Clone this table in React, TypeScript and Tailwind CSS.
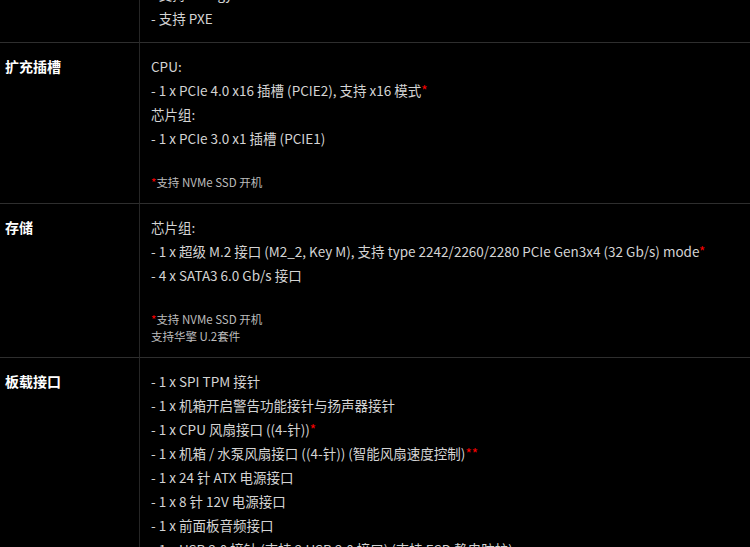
import { Fragment, ReactNode } from "react";

type Spec = {
  label: string;
  lines: ReactNode[];
  notes?: ReactNode[];
};

const Star = ({ n = 1 }: { n?: number }) => (
  <span className="text-[#ff0000]">{"*".repeat(n)}</span>
);

const specs: Spec[] = [
  {
    label: "网络功能",
    lines: ["- Realtek 1Gb 以太网", "- 支持 Energy", "- 支持 PXE"],
  },
  {
    label: "扩充插槽",
    lines: [
      "CPU:",
      <>
        - 1 x PCIe 4.0 x16 插槽 (PCIE2), 支持 x16 模式
        <Star />
      </>,
      "芯片组:",
      "- 1 x PCIe 3.0 x1 插槽 (PCIE1)",
    ],
    notes: [
      <>
        <Star />
        支持 NVMe SSD 开机
      </>,
    ],
  },
  {
    label: "存储",
    lines: [
      "芯片组:",
      <>
        - 1 x 超级 M.2 接口 (M2_2, Key M), 支持 type 2242/2260/2280 PCIe
        Gen3x4 (32 Gb/s) mode
        <Star />
      </>,
      "- 4 x SATA3 6.0 Gb/s 接口",
    ],
    notes: [
      <>
        <Star />
        支持 NVMe SSD 开机
      </>,
      "支持华擎 U.2套件",
    ],
  },
  {
    label: "板载接口",
    lines: [
      "- 1 x SPI TPM 接针",
      "- 1 x 机箱开启警告功能接针与扬声器接针",
      <>
        - 1 x CPU 风扇接口 ((4-针))
        <Star />
      </>,
      <>
        - 1 x 机箱 / 水泵风扇接口 ((4-针)) (智能风扇速度控制)
        <Star n={2} />
      </>,
      "- 1 x 24 针 ATX 电源接口",
      "- 1 x 8 针 12V 电源接口",
      "- 1 x 前面板音频接口",
      "- 1 x USB 2.0 接针 (支持 2 USB 2.0 接口) (支持 ESD 静电防护)",
    ],
  },
];

export default function App() {
  return (
    <div
      className="h-[547px] w-[750px] overflow-hidden bg-black"
      style={{ fontFamily: '"Noto Sans CJK SC", "Noto Sans", sans-serif' }}
    >
      <div className="-mt-[53px] grid grid-cols-[140px_1fr]">
        {specs.map((s) => (
          <Fragment key={s.label}>
            <div className="border-b border-r border-b-[#2e2e2e] border-r-[#262626] pl-[5px] pt-[11px] text-[14px] font-bold leading-[24px] text-white">
              {s.label}
            </div>
            <div className="border-b border-[#2e2e2e] pb-[12px] pl-[11px] pt-[11px] text-[13.5px] leading-[24px] text-[#d4d4d4]">
              {s.lines.map((l, i) => (
                <div key={i} className="whitespace-nowrap">
                  {l}
                </div>
              ))}
              {s.notes ? (
                <div className="mt-[24px] text-[11.5px] leading-[17px] text-[#bdbdbd]">
                  {s.notes.map((n, i) => (
                    <div key={i}>{n}</div>
                  ))}
                </div>
              ) : null}
            </div>
          </Fragment>
        ))}
      </div>
    </div>
  );
}
